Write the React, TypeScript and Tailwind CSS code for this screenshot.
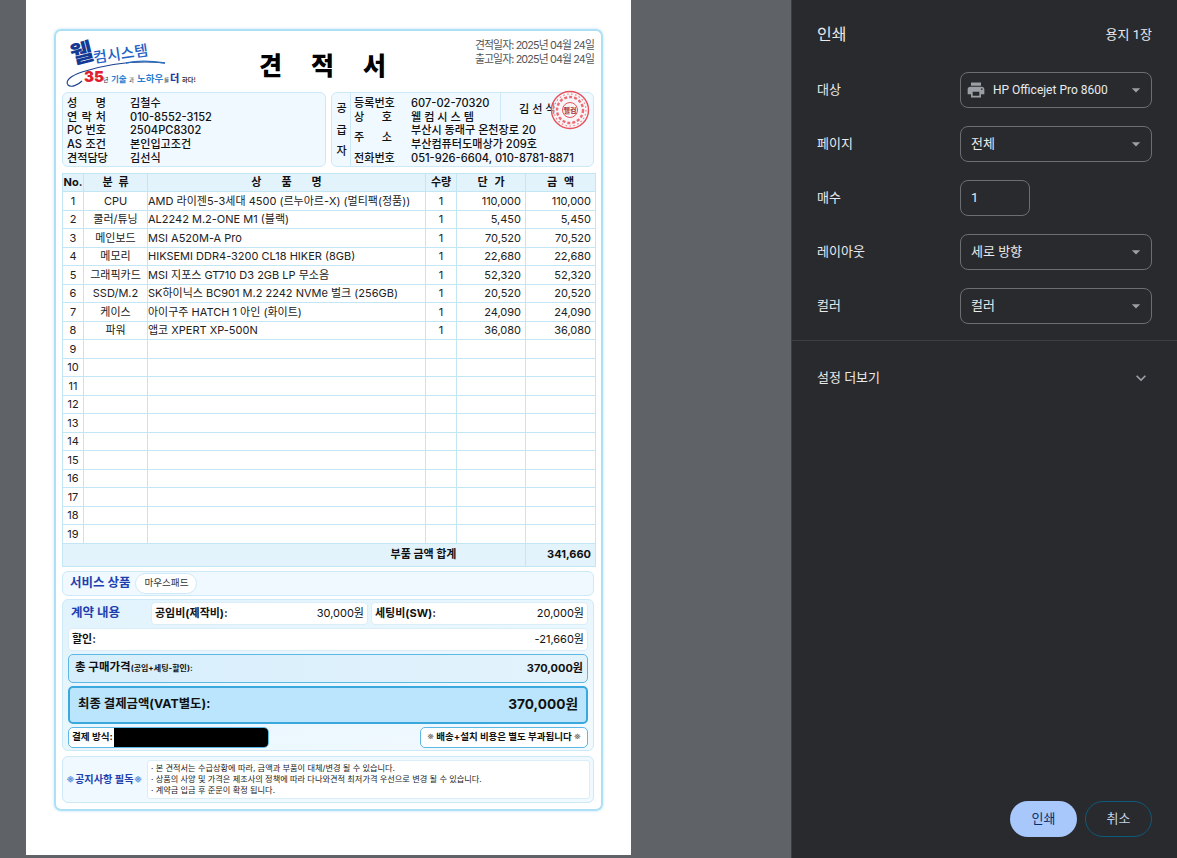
import React from 'react';
import { MdArrowDropDown, MdExpandMore, MdPrint } from 'react-icons/md';

const parts = [
  ['CPU', 'AMD 라이젠5-3세대 4500 (르누아르-X) (멀티팩(정품))', '110,000'],
  ['쿨러/튜닝', 'AL2242 M.2-ONE M1 (블랙)', '5,450'],
  ['메인보드', 'MSI A520M-A Pro', '70,520'],
  ['메모리', 'HIKSEMI DDR4-3200 CL18 HIKER (8GB)', '22,680'],
  ['그래픽카드', 'MSI 지포스 GT710 D3 2GB LP 무소음', '52,320'],
  ['SSD/M.2', 'SK하이닉스 BC901 M.2 2242 NVMe 벌크 (256GB)', '20,520'],
  ['케이스', '아이구주 HATCH 1 아인 (화이트)', '24,090'],
  ['파워', '앱코 XPERT XP-500N', '36,080'],
];

const rows = Array.from({ length: 19 }, (_, i) => parts[i] ?? ['', '', '']);

const customer = [
  ['성 명', '김철수'],
  ['연 락 처', '010-8552-3152'],
  ['PC 번호', '2504PC8302'],
  ['AS 조건', '본인입고조건'],
  ['견적담당', '김선식'],
];

const cell = 'border border-[#c3e6f5] p-0';
const krFont = "'Noto Sans CJK KR', sans-serif";

const Label = ({ text }: { text: string }) => (
  <span className="flex justify-between whitespace-nowrap">
    {text.split(' ').map((t) => (
      <span key={t}>{t}</span>
    ))}
  </span>
);

const Logo = () => (
  <svg width="136" height="53" viewBox="0 0 136 53" className="shrink-0 overflow-visible">
    <path d="M101 28 C70 25 40 30 18 37 C6 41 1 46 4 50 C7 53 14 50 18 46" fill="none" stroke="#1d3f8f" strokeWidth="1.1" />
    <path d="M62 28 C75 25 88 26 101 28" fill="none" stroke="#2a6fc0" strokeWidth="1.3" />
    <text x="9" y="29" fontSize="24" fontWeight="900" fill="#123a94" transform="rotate(-14 9 29)" fontFamily={krFont}>웰</text>
    <text x="30" y="28" fontSize="15" fontWeight="500" fill="#1f63c4" transform="rotate(-8 30 28)" fontFamily={krFont}>컴시스템</text>
    <text x="20" y="47" fontSize="15" fontWeight="900" fill="#e0202c" fontFamily="Inter, sans-serif">35</text>
    <text x="39" y="47" fontSize="6" fill="#333" fontFamily={krFont}>년</text>
    <text x="47" y="47" fontSize="8.5" fontWeight="700" fill="#2a7fd0" fontFamily={krFont}>기술</text>
    <text x="65" y="47" fontSize="5.5" fill="#333" fontFamily={krFont}>과</text>
    <text x="73" y="47" fontSize="9.5" fontWeight="700" fill="#2a7fd0" fontFamily={krFont}>노하우</text>
    <text x="100" y="47" fontSize="5.5" fill="#333" fontFamily={krFont}>를</text>
    <text x="106" y="47" fontSize="10" fontWeight="900" fill="#1f3fa8" fontFamily={krFont}>더</text>
    <text x="118" y="47" fontSize="6.2" fontWeight="700" fill="#333" fontFamily={krFont}>하다!</text>
  </svg>
);

const Stamp = () => (
  <svg width="40" height="40" viewBox="0 0 40 40" className="absolute left-[199px] top-[-3px]">
    <circle cx="20" cy="20" r="18.5" fill="#fff1f1" fillOpacity="0.5" stroke="#e8505a" strokeWidth="1.4" />
    <circle cx="20" cy="20" r="13" fill="none" stroke="#ef6a72" strokeWidth="2.4" strokeDasharray="3 2" />
    <circle cx="20" cy="20" r="7.5" fill="none" stroke="#e8505a" strokeWidth="1" />
    <circle cx="20" cy="20" r="16" fill="none" stroke="#f08088" strokeWidth="1.2" strokeDasharray="1.5 2.5" />
    <text x="20" y="23" textAnchor="middle" fontSize="7" fontWeight="700" fill="#a03038" fontFamily={krFont}>웰컴</text>
  </svg>
);

const Select = ({ children }: { children: React.ReactNode }) => (
  <div className="flex h-9 w-[192px] items-center justify-between rounded-lg border border-[#6d6e72] pl-[10px] pr-[5px] text-[13px] text-[#e8eaed]">
    <div className="flex items-center">{children}</div>
    <MdArrowDropDown size={20} className="text-[#9aa0a6]" />
  </div>
);

const SettingRow = ({ label, children }: { label: string; children: React.ReactNode }) => (
  <div className="flex h-9 items-center justify-between">
    <span className="text-[13px] text-[#e8eaed]">{label}</span>
    <div className="w-[192px]">{children}</div>
  </div>
);

export default function App() {
  return (
    <div className="flex h-[858px] w-[1177px] overflow-hidden bg-[#5f6368] font-['Inter','Noto_Sans_CJK_KR',sans-serif]">
      {/* Print preview */}
      <div className="w-[791px] shrink-0 pl-[26px]">
        <div className="h-[855px] w-[605px] bg-white pl-[28px] pt-[29px]">
          <div className="h-[782px] w-[549px] rounded-[7px] border-2 border-[#aee0f5] px-[6px] shadow-[0_0_3px_rgba(125,200,235,0.5)]">
            {/* Header */}
            <div className="flex h-[61px] items-start">
              <div className="ml-[2px] mt-[4px]">
                <Logo />
              </div>
              <h1 className="ml-[59px] mt-[17px] whitespace-nowrap text-[25px] font-black leading-[36px] tracking-[29px] text-black">견적서</h1>
              <div className="ml-auto mr-[1px] mt-[8px] whitespace-nowrap text-right text-[10.8px] leading-[14px] tracking-[-0.08em] text-[#555]">
                <p>견적일자: 2025년 04월 24일</p>
                <p>출고일자: 2025년 04월 24일</p>
              </div>
            </div>

            {/* Customer / supplier */}
            <div className="flex h-[75px] gap-[5px] text-[11.1px] font-medium leading-[13.7px] text-[#111]">
              <div className="w-[264px] rounded-[6px] border border-[#cde9f7] bg-[#f0f9ff] px-[4px] pt-[4px]">
                {customer.map(([k, v]) => (
                  <div key={k} className="flex">
                    <div className="w-[39px]">
                      <Label text={k} />
                    </div>
                    <span className="ml-[24px]">{v}</span>
                  </div>
                ))}
              </div>
              <div className="flex w-[263px] rounded-[6px] border border-[#cde9f7] bg-[#f0f9ff]">
                <div className="flex w-[19px] flex-col items-center justify-around border-r border-[#cde9f7] pb-[3px] pl-[1px] pt-[5px]">
                  <span>공</span>
                  <span>급</span>
                  <span>자</span>
                </div>
                <div className="relative flex-1 pl-[3px] pt-[4px]">
                  <div className="flex">
                    <div className="w-[38px] whitespace-nowrap">등록번호</div>
                    <span className="ml-[19px]">607-02-70320</span>
                  </div>
                  <div className="flex">
                    <div className="w-[38px]">
                      <Label text="상 호" />
                    </div>
                    <span className="ml-[19px]">웰 컴 시 스 템</span>
                  </div>
                  <div className="flex items-center">
                    <div className="w-[38px]">
                      <Label text="주 소" />
                    </div>
                    <span className="ml-[19px]">
                      부산시 동래구 온천장로 20
                      <br />
                      부산컴퓨터도매상가 209호
                    </span>
                  </div>
                  <div className="flex">
                    <div className="w-[38px] whitespace-nowrap">전화번호</div>
                    <span className="ml-[19px] whitespace-nowrap">051-926-6604, 010-8781-8871</span>
                  </div>
                  <div className="absolute left-[149px] top-0 h-[29px] border-l border-[#cde9f7]" />
                  <span className="absolute left-[168px] top-[10px] whitespace-nowrap">김 선 식</span>
                  <Stamp />
                </div>
              </div>
            </div>

            {/* Parts table */}
            <table className="mt-[6px] w-[533px] table-fixed border-collapse text-[11px] text-[#222]">
              <colgroup>
                <col className="w-[21px]" />
                <col className="w-[64px]" />
                <col className="w-[278px]" />
                <col className="w-[31px]" />
                <col className="w-[69px]" />
                <col className="w-[70px]" />
              </colgroup>
              <thead>
                <tr className="h-[18px] bg-[#e3f3fc] font-semibold text-[#111]">
                  <th className={`${cell} font-bold`}>No.</th>
                  <th className={`${cell} pl-[6px] font-semibold tracking-[6px]`}>분류</th>
                  <th className={`${cell} pl-[20px] font-semibold tracking-[20px]`}>상품명</th>
                  <th className={`${cell} font-semibold`}>수량</th>
                  <th className={`${cell} pl-[7px] font-semibold tracking-[7px]`}>단가</th>
                  <th className={`${cell} pl-[7px] font-semibold tracking-[7px]`}>금액</th>
                </tr>
              </thead>
              <tbody>
                {rows.map(([kind, name, price], i) => (
                  <tr key={i} className="h-[18.5px] leading-[14px]">
                    <td className={`${cell} text-center`}>{i + 1}</td>
                    <td className={`${cell} whitespace-nowrap text-center`}>{kind}</td>
                    <td className={`${cell} whitespace-nowrap`}>{name}</td>
                    <td className={`${cell} text-center`}>{name ? '1' : ''}</td>
                    <td className={`${cell} pr-[4px] text-right`}>{price}</td>
                    <td className={`${cell} pr-[4px] text-right`}>{price}</td>
                  </tr>
                ))}
              </tbody>
              <tfoot>
                <tr className="h-[23px] bg-[#e3f3fc] font-bold text-[#111]">
                  <td colSpan={4} className={`${cell} border-r-0 text-right`}>
                    부품 금액 합계
                  </td>
                  <td className={`${cell} border-l-0`} />
                  <td className={`${cell} pr-[4px] text-right`}>341,660</td>
                </tr>
              </tfoot>
            </table>

            {/* Service items */}
            <div className="mt-[4px] flex h-[25px] w-[532px] items-center gap-[5px] rounded-[6px] border border-[#cde9f7] bg-[#f0f9ff] pl-[7px]">
              <span className="text-[12.5px] font-bold text-[#1e40af]">서비스 상품</span>
              <span className="flex h-[21px] w-[62px] items-center justify-center whitespace-nowrap rounded-full border border-[#cde9f7] bg-white text-[9.6px] text-[#333]">마우스패드</span>
            </div>

            {/* Contract */}
            <div className="mt-[3px] flex h-[152px] w-[532px] flex-col gap-[3px] rounded-[6px] border border-[#cde9f7] bg-gradient-to-br from-[#e1f3fd] to-[#f2faff] px-[5px] pt-[2px] text-[#111]">
              <div className="flex h-[23px] gap-[3px]">
                <span className="w-[80px] pl-[3px] text-[12.5px] font-bold leading-[21px] text-[#1e40af]">계약 내용</span>
                <div className="flex w-[217px] items-center justify-between rounded-[4px] border border-[#d9eef9] bg-white px-[3px] text-[11px]">
                  <b className="font-bold">공임비(제작비):</b>
                  <span>30,000원</span>
                </div>
                <div className="flex w-[217px] items-center justify-between rounded-[4px] border border-[#d9eef9] bg-white px-[3px] text-[11px]">
                  <b className="font-bold">세팅비(SW):</b>
                  <span>20,000원</span>
                </div>
              </div>
              <div className="flex h-[23px] items-center justify-between rounded-[4px] border border-[#d9eef9] bg-white px-[3px] text-[11px]">
                <b className="font-bold">할인:</b>
                <span>-21,660원</span>
              </div>
              <div className="flex h-[29px] items-center justify-between rounded-[5px] border border-[#5db9e4] bg-gradient-to-r from-[#d6eefb] to-[#e3f3fc] pl-[6px] pr-[4px] font-bold">
                <span className="text-[11.5px]">
                  총 구매가격<span className="text-[8px]">(공임+세팅-할인):</span>
                </span>
                <span className="text-[11px]">370,000원</span>
              </div>
              <div className="flex h-[38px] items-center justify-between rounded-[5px] border-2 border-[#3aa8dc] bg-[#bae5fc] pl-[8px] pr-[8px] font-bold">
                <span className="text-[12.4px]">최종 결제금액(VAT별도):</span>
                <span className="text-[13.7px]">370,000원</span>
              </div>
              <div className="flex h-[21px] items-center justify-between">
                <div className="flex h-[21px] w-[201px] items-center overflow-hidden rounded-[5px] border border-[#5db9e4] bg-white pl-[3px] text-[9.6px] font-bold">
                  <span className="w-[42px] whitespace-nowrap">결제 방식:</span>
                  <div className="h-full flex-1 bg-black" />
                </div>
                <div className="flex h-[21px] w-[168px] items-center justify-center whitespace-nowrap rounded-[5px] border border-[#5db9e4] bg-white text-[9.5px] font-bold">
                  <span className="text-[10.5px] font-normal text-[#777]">※</span>&nbsp;배송+설치 비용은 별도 부과됩니다&nbsp;<span className="text-[10.5px] font-normal text-[#777]">※</span>
                </div>
              </div>
            </div>

            {/* Notice */}
            <div className="mt-[5px] flex h-[47px] w-[532px] items-center rounded-[6px] border border-[#cde9f7] bg-[#f0f9ff] pl-[3px]">
              <span className="w-[81px] whitespace-nowrap text-[10.2px] font-bold text-[#1e40af]">
                <span className="text-[11px] text-[#6b9be0]">※</span>공지사항 필독<span className="text-[11px] text-[#6b9be0]">※</span>
              </span>
              <div className="flex h-[39px] w-[443px] flex-col justify-center rounded-[3px] border border-[#d9eef9] bg-white pl-[3px] text-[8.2px] leading-[11px] text-[#222]">
                <p>· 본 견적서는 수급상황에 따라, 금액과 부품이 대체/변경 될 수 있습니다.</p>
                <p>· 상품의 사양 및 가격은 제조사의 정책에 따라 다나와견적 최저가격 우선으로 변경 될 수 있습니다.</p>
                <p>· 계약금 입금 후 준문이 확정 됩니다.</p>
              </div>
            </div>
          </div>
        </div>
      </div>

      {/* Print settings */}
      <div className="flex w-[386px] shrink-0 flex-col border-l border-[#3c3d40] bg-[#292a2d] font-['Roboto','Noto_Sans_CJK_KR',sans-serif]">
        <div className="flex items-center justify-between px-[25px] pt-[23px]">
          <h2 className="text-[16px] font-normal leading-[24px] text-[#e8eaed]">인쇄</h2>
          <span className="text-[13px] text-[#e8eaed]">용지 1장</span>
        </div>
        <div className="flex flex-col gap-[18px] px-[25px] pt-[25px]">
          <SettingRow label="대상">
            <Select>
              <MdPrint size={20} className="ml-[-5px] mr-[7px] text-[#9aa0a6]" />
              <span className="text-[12px]">HP Officejet Pro 8600</span>
            </Select>
          </SettingRow>
          <SettingRow label="페이지">
            <Select>전체</Select>
          </SettingRow>
          <SettingRow label="매수">
            <div className="flex h-9 w-[70px] items-center rounded-lg border border-[#6d6e72] pl-[10px] text-[13px] text-[#e8eaed]">1</div>
          </SettingRow>
          <SettingRow label="레이아웃">
            <Select>세로 방향</Select>
          </SettingRow>
          <SettingRow label="컬러">
            <Select>컬러</Select>
          </SettingRow>
        </div>
        <div className="mt-[16px] border-t border-[#3f4043]" />
        <div className="flex items-center justify-between pl-[25px] pr-[26px] pt-[27px]">
          <span className="text-[13px] leading-[20px] text-[#e8eaed]">설정 더보기</span>
          <MdExpandMore size={20} className="text-[#9aa0a6]" />
        </div>
        <div className="mt-auto flex justify-end gap-2 pb-[21px] pr-[25px]">
          <button className="h-9 w-[67px] rounded-full bg-[#a8c7fa] text-[13px] text-[#062e6f]">인쇄</button>
          <button className="h-9 w-[67px] rounded-full border border-[#0e5a7c] text-[13px] text-[#c4d4ea]">취소</button>
        </div>
      </div>
    </div>
  );
}
